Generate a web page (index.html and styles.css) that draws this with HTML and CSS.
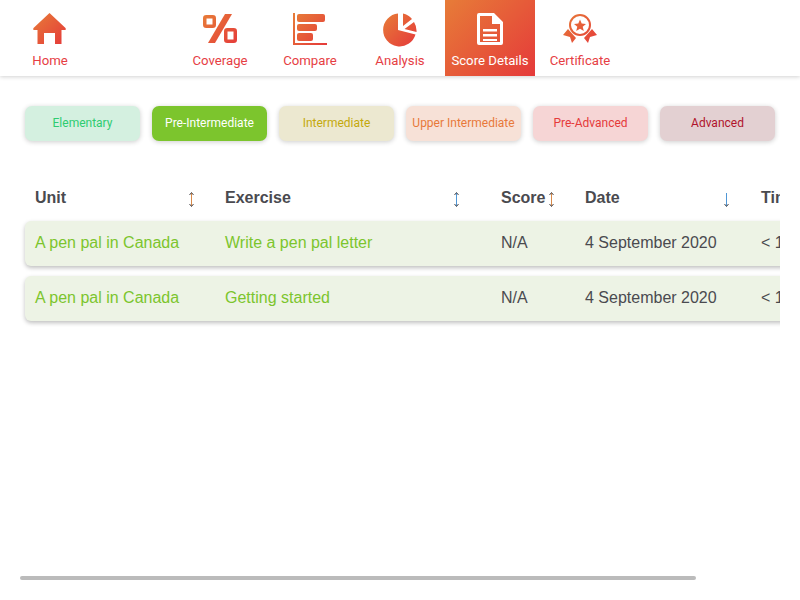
FILE: index.html
```html
<!DOCTYPE html>
<html lang="en">
<head>
    <meta charset="UTF-8">
    <meta name="viewport" content="width=device-width, initial-scale=1.0">
    <title>Score Details</title>
    <link rel="stylesheet" href="styles.css">
</head>
<body>
    <svg class="defs" width="0" height="0" aria-hidden="true">
        <defs>
            <linearGradient id="brand" x1="0" y1="0" x2="1" y2="1">
                <stop offset="0" stop-color="#e77c38"/>
                <stop offset="1" stop-color="#e53a3a"/>
            </linearGradient>
            <linearGradient id="brand-user" gradientUnits="userSpaceOnUse" x1="2" y1="2" x2="34" y2="34">
                <stop offset="0" stop-color="#e77c38"/>
                <stop offset="1" stop-color="#e53a3a"/>
            </linearGradient>
        </defs>
    </svg>

    <nav class="topnav">
        <a class="nav-item nav-home">
            <svg class="nav-icon" viewBox="0 0 36 36"><path fill="url(#brand)" d="M17.500 1 L33.500 16 Q34.500 18 32.500 18 L29.500 18 L29.500 32 L23 32 L23 21 L12 21 L12 32 L5.500 32 L5.500 18 L2.500 18 Q0.500 18 1.500 16 Z"/></svg>
            <span>Home</span>
        </a>
        <a class="nav-item">
            <svg class="nav-icon" viewBox="0 0 36 36">
                <g fill="none" stroke="url(#brand-user)" stroke-width="3.500">
                    <rect x="2.750" y="4.750" width="9.500" height="9.500" rx="1.500"/>
                    <rect x="23.750" y="17.750" width="9.500" height="11.500" rx="1.500"/>
                </g>
                <path fill="url(#brand-user)" d="M23 2 H30 L13 31 H6 Z"/>
            </svg>
            <span>Coverage</span>
        </a>
        <a class="nav-item">
            <svg class="nav-icon" viewBox="0 0 36 36">
                <path fill="url(#brand-user)" d="M1 1 H3 V31 H35 V33 H1 Z"/>
                <g fill="url(#brand-user)">
                    <rect x="5" y="2" width="28" height="8" rx="2"/>
                    <rect x="5" y="12" width="20" height="7" rx="2"/>
                    <rect x="5" y="21" width="16" height="8" rx="2"/>
                </g>
            </svg>
            <span>Compare</span>
        </a>
        <a class="nav-item">
            <svg class="nav-icon" viewBox="0 0 36 36"><path fill="url(#brand-user)" d="M16 1.500 V18 L33.500 22.500 A16.500 16.500 0 1 1 16 1.500 Z M21 1.500 A16 16 0 0 1 30 7 L21 14 Z M32 10 A16.500 16.500 0 0 1 34.500 20 L22.500 17 Z"/></svg>
            <span>Analysis</span>
        </a>
        <a class="nav-item active">
            <svg class="nav-icon" viewBox="0 0 36 36"><path fill="#fff" fill-rule="evenodd" d="M7 1 H22 L31 10 V31 Q31 33 29 33 H7 Q5 33 5 31 V3 Q5 1 7 1 Z M8 4 V30 H28 V12 H20 V4 Z M11 17 H25 V19.500 H11 Z M11 22 H25 V24.500 H11 Z M11 27 H25 V29 H11 Z"/></svg>
            <span>Score Details</span>
        </a>
        <a class="nav-item">
            <svg class="nav-icon" viewBox="0 0 36 36">
                <circle cx="18" cy="13" r="10" fill="none" stroke="url(#brand-user)" stroke-width="2"/>
                <path fill="url(#brand-user)" d="M18 7.500 L19.700 11.600 L24 11.900 L20.700 14.700 L21.800 19 L18 16.700 L14.200 19 L15.300 14.700 L12 11.900 L16.300 11.600 Z"/>
                <path fill="url(#brand-user)" d="M6 17 L14 26 L10 31 L8 25 L1 23 Z M30 17 L22 26 L26 31 L28 25 L35 23 Z"/>
            </svg>
            <span>Certificate</span>
        </a>
    </nav>

    <div class="levels">
        <button class="level elementary">Elementary</button>
        <button class="level pre-intermediate">Pre-Intermediate</button>
        <button class="level intermediate">Intermediate</button>
        <button class="level upper">Upper Intermediate</button>
        <button class="level pre-advanced">Pre-Advanced</button>
        <button class="level advanced">Advanced</button>
    </div>

    <div class="table-wrap">
        <div class="grid head">
            <div class="cell">Unit
                <svg class="sort sort-unit orange" viewBox="0 0 7 15"><path class="shaft" d="M3.500 1 V14"/><path class="tip" d="M1.500 3 L3.500 0.500 L5.500 3 M1.500 12 L3.500 14.500 L5.500 12"/></svg>
            </div>
            <div class="cell">Exercise
                <svg class="sort sort-exercise blue" viewBox="0 0 7 15"><path class="shaft" d="M3.500 1 V14"/><path class="tip" d="M1.500 3 L3.500 0.500 L5.500 3 M1.500 12 L3.500 14.500 L5.500 12"/></svg>
            </div>
            <div class="cell">Score
                <svg class="sort sort-unit orange" viewBox="0 0 7 15"><path class="shaft" d="M3.500 1 V14"/><path class="tip" d="M1.500 3 L3.500 0.500 L5.500 3 M1.500 12 L3.500 14.500 L5.500 12"/></svg>
            </div>
            <div class="cell">Date
                <svg class="sort sort-date blue" viewBox="0 0 7 15"><path class="shaft" d="M3.500 1 V14"/><path class="tip" d="M1.500 12 L3.500 14.500 L5.500 12"/></svg>
            </div>
            <div class="cell">Time</div>
        </div>
        <div class="grid row">
            <div class="cell link">A pen pal in Canada</div>
            <div class="cell link">Write a pen pal letter</div>
            <div class="cell">N/A</div>
            <div class="cell">4 September 2020</div>
            <div class="cell">&lt; 1 minute</div>
        </div>
        <div class="grid row">
            <div class="cell link">A pen pal in Canada</div>
            <div class="cell link">Getting started</div>
            <div class="cell">N/A</div>
            <div class="cell">4 September 2020</div>
            <div class="cell">&lt; 1 minute</div>
        </div>
    </div>

    <div class="scroll-track"><div class="scroll-thumb"></div></div>
</body>
</html>
```

FILE: styles.css
```css
html, body {
    height: 600px;
    overflow: hidden;
}
body {
    margin: 0;
    background: #fff;
    font-family: "Liberation Sans", Arial, sans-serif;
    color: #4a4a4f;
    display: flex;
    flex-direction: column;
}
.defs {
    position: absolute;
}
.topnav {
    display: flex;
    height: 76px;
    flex-shrink: 0;
    box-shadow: 0 1px 4px rgba(0, 0, 0, 0.18);
}
.nav-item {
    width: 90px;
    display: flex;
    flex-direction: column;
    align-items: center;
    padding-top: 12px;
    box-sizing: border-box;
    font-family: Roboto, sans-serif;
    font-size: 13.200px;
    line-height: 16px;
    color: #e63e44;
}
.nav-home {
    width: 100px;
    margin-right: 75px;
}
.nav-icon {
    width: 36px;
    height: 36px;
    margin-bottom: 5px;
}
.nav-item.active {
    background: linear-gradient(135deg, #e77c38 0%, #e53a3a 100%);
    color: #fff;
}
.levels {
    display: flex;
    gap: 12px;
    padding: 30px 0 0 25px;
}
.level {
    width: 115px;
    height: 35px;
    padding: 0 0 2px;
    border: none;
    border-radius: 7px;
    font-family: Roboto, sans-serif;
    font-size: 12px;
    box-shadow: 0 1px 5px rgba(0, 0, 0, 0.2);
}
.elementary { background: #d4f0e0; color: #2ecc71; }
.pre-intermediate { background: #7cc52d; color: #fff; }
.intermediate { background: #ece8d0; color: #c4a80c; }
.upper { background: #f7e1d7; color: #e8793a; }
.pre-advanced { background: #f6d5d5; color: #e53a3a; }
.advanced { background: #e3d0d2; color: #b0142c; }
.table-wrap {
    margin: 42px 20px 0 0;
    padding: 0 0 6px 25px;
    overflow: hidden;
}
.grid {
    display: grid;
    grid-template-columns: 190px 276px 84px 176px 200px;
    width: 926px;
}
.head {
    height: 28px;
    align-items: center;
    font-weight: bold;
    font-size: 16px;
}
.head .cell {
    margin-top: 2px;
}
.row {
    height: 45px;
    margin-top: 10px;
    align-items: center;
    background: #edf3e5;
    border-radius: 6px;
    font-size: 16px;
    box-shadow: 0 2px 4px rgba(0, 0, 0, 0.25);
}
.row .cell {
    margin-top: -1px;
}
.head .cell,
.row .cell {
    padding-left: 10px;
    position: relative;
}
.link {
    color: #7cc52d;
}
.sort {
    position: absolute;
    top: 3px;
    width: 7px;
    height: 15px;
    fill: none;
}
.sort .tip {
    stroke: #4a4a4f;
    stroke-width: 1;
}
.sort .shaft {
    stroke-width: 1;
}
.orange .shaft { stroke: #d98a4a; }
.blue .shaft { stroke: #4f97d6; }
.sort-unit { right: 20px; }
.sort-exercise { right: 31px; }
.sort-date { right: 21px; }
.scroll-track {
    margin-top: auto;
    padding: 0 0 20px 20px;
}
.scroll-thumb {
    width: 676px;
    height: 4px;
    background: #bbb;
    border-radius: 2px;
}
```
